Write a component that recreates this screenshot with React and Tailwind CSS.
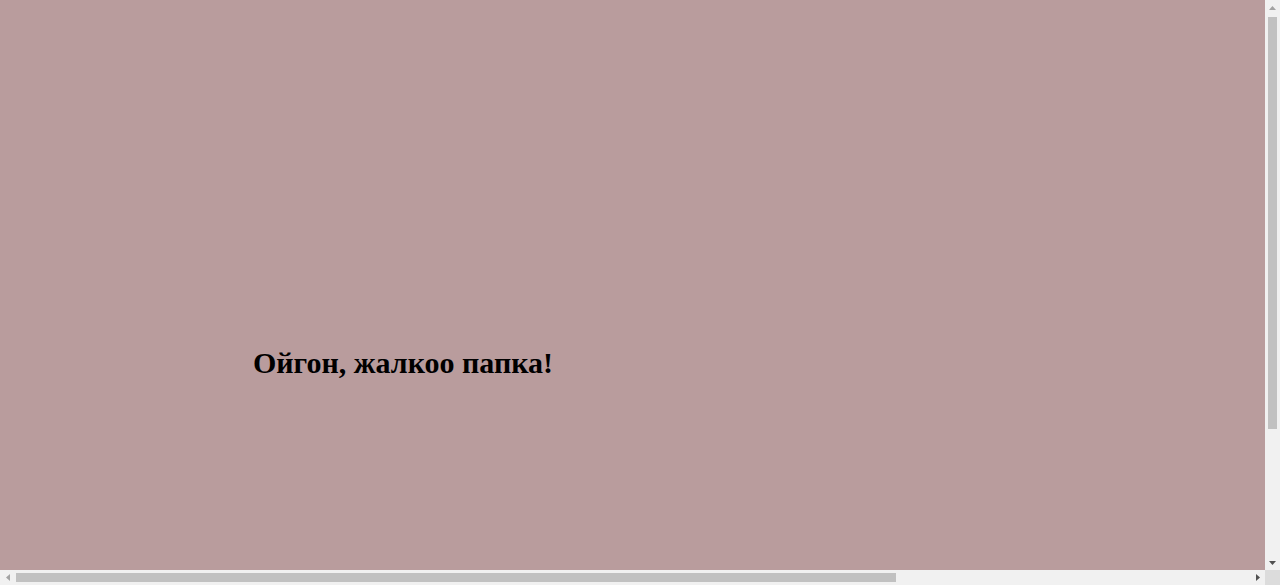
export default function App() {
  return (
    <div className="flex h-[585px] w-[1280px] flex-col overflow-hidden bg-[#f1f1f1]">
      <div className="flex h-[570px]">
        <main className="w-[1265px] bg-[#b99c9d] pl-[253px] pt-[345px]">
          <h1 className="font-['Liberation_Serif','Times_New_Roman',serif] text-[30px] font-bold leading-[35px] text-black">
            Ойгон, жалкоо папка!
          </h1>
        </main>
        {/* vertical scrollbar */}
        <div className="flex w-[15px] flex-col items-center bg-[#f1f1f1]">
          <div className="flex h-[15px] w-full items-center justify-center">
            <svg width="7" height="4" viewBox="0 0 7 4">
              <path d="M3.5 0 L7 4 L0 4 Z" fill="#a3a3a3" />
            </svg>
          </div>
          <div className="mt-[2px] h-[412px] w-[9px] bg-[#c1c1c1]" />
          <div className="flex-1" />
          <div className="flex h-[15px] w-full items-center justify-center">
            <svg width="7" height="4" viewBox="0 0 7 4">
              <path d="M0 0 L7 0 L3.5 4 Z" fill="#505050" />
            </svg>
          </div>
        </div>
      </div>
      {/* horizontal scrollbar */}
      <div className="flex h-[15px]">
        <div className="flex w-[1265px] items-center">
          <div className="flex h-[15px] w-[15px] items-center justify-center">
            <svg width="4" height="7" viewBox="0 0 4 7">
              <path d="M4 0 L4 7 L0 3.5 Z" fill="#a3a3a3" />
            </svg>
          </div>
          <div className="ml-[1px] h-[9px] w-[880px] bg-[#c1c1c1]" />
          <div className="flex-1" />
          <div className="flex h-[15px] w-[15px] items-center justify-center">
            <svg width="4" height="7" viewBox="0 0 4 7">
              <path d="M0 0 L4 3.5 L0 7 Z" fill="#505050" />
            </svg>
          </div>
        </div>
        <div className="w-[15px] bg-[#dcdcdc]" />
      </div>
    </div>
  );
}
